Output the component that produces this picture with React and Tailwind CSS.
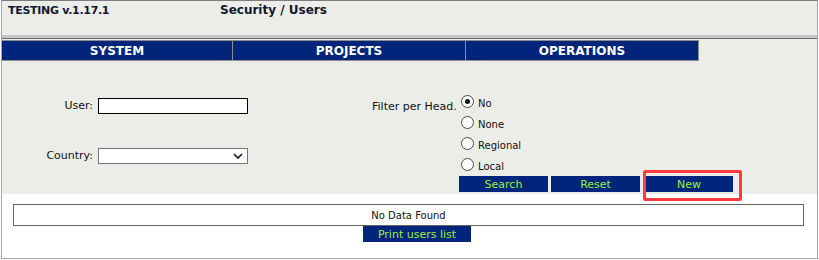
import { useState } from 'react';

const navItems = [
  { label: 'SYSTEM', width: 'w-[231px]' },
  { label: 'PROJECTS', width: 'w-[233px]' },
  { label: 'OPERATIONS', width: 'w-[233px]' },
];

const headOptions = ['No', 'None', 'Regional', 'Local'];

const Radio = ({ checked }) => (
  <span className="w-[13px] h-[13px] rounded-full border border-[#4a4a4a] bg-white flex items-center justify-center shrink-0">
    {checked && <span className="w-[5px] h-[5px] rounded-full bg-[#111]" />}
  </span>
);

const BlueButton = ({ children, className = '' }) => (
  <button
    type="button"
    className={`h-[16px] bg-[#00257a] text-[#99f03c] text-[11px] leading-none flex items-center justify-center ${className}`}
  >
    {children}
  </button>
);

const App = () => {
  const [head, setHead] = useState('No');

  return (
    <div className="w-[819px] h-[260px] bg-white font-['DejaVu_Sans',Verdana,sans-serif] text-[#111]">
      <div className="relative ml-[1px] w-[817px] h-[259px] border border-[#a9a9a9] border-t-[#7d7d7d] flex flex-col">
        {/* header */}
        <div className="h-[34px] bg-[#ecede8] flex items-start pt-[3px] text-[#101830]">
          <span className="ml-[6px] w-[212px] text-[11px] leading-[13px] font-bold tracking-[-0.3px]">
            TESTING v.1.17.1
          </span>
          <span className="text-[12px] leading-[13px] font-bold">Security / Users</span>
        </div>
        <div className="h-[3px] bg-[#c8c8c8]" />
        <div className="h-px bg-[#707070]" />
        <div className="h-px bg-[#ecede8]" />

        {/* menu */}
        <div className="flex bg-[#ecede8]">
          {navItems.map((item) => (
            <div
              key={item.label}
              className={`${item.width} h-[21px] border-y border-r border-[#8c8c8c] bg-[#00257a] text-white text-[12px] font-bold flex items-center justify-center`}
            >
              {item.label}
            </div>
          ))}
        </div>

        {/* filters */}
        <div className="h-[133px] bg-[#ecede8] flex pt-[34px] text-[11px]">
          <div className="w-[370px]">
            <div className="flex items-center mt-[3px]">
              <label className="w-[91px] text-right">User:</label>
              <input type="text" className="ml-[5px] w-[150px] h-[16px] border border-black bg-white outline-none" />
            </div>
            <div className="flex items-center mt-[33px]">
              <label className="w-[91px] text-right">Country:</label>
              <div className="ml-[5px] w-[150px] h-[16px] border border-[#767676] bg-white flex items-center justify-end pr-[4px]">
                <svg width="10" height="6" viewBox="0 0 10 6">
                  <polyline points="1,1 5,5 9,1" fill="none" stroke="#111" strokeWidth="1.6" />
                </svg>
              </div>
            </div>
          </div>

          <div>
            <div className="flex">
              <span className="w-[89px] mt-[5px] leading-[13px]">Filter per Head.</span>
              <div className="flex flex-col gap-[8px]">
                {headOptions.map((opt) => (
                  <div key={opt} className="h-[13px] flex items-start cursor-pointer" onClick={() => setHead(opt)}>
                    <Radio checked={head === opt} />
                    <span className="ml-[4px] mt-[3px] text-[10px] leading-[12px]">{opt}</span>
                  </div>
                ))}
              </div>
            </div>
            <div className="flex mt-[5px] ml-[87px]">
              <BlueButton className="w-[89px]">Search</BlueButton>
              <BlueButton className="w-[89px] ml-[3px]">Reset</BlueButton>
              <BlueButton className="w-[88px] ml-[5px]">New</BlueButton>
            </div>
          </div>
        </div>

        {/* results */}
        <div className="flex-1 bg-white pt-[10px]">
          <div className="ml-[11px] w-[791px] h-[22px] border border-[#666] flex items-center justify-center text-[10px]">
            No Data Found
          </div>
          <BlueButton className="ml-[361px] w-[108px]">Print users list</BlueButton>
        </div>

        {/* highlight on New */}
        <div className="absolute left-[641px] top-[169px] w-[99px] h-[31px] border-[3px] border-[#ff3b3b] rounded-[2px] pointer-events-none" />
      </div>
    </div>
  );
};

export default App;
